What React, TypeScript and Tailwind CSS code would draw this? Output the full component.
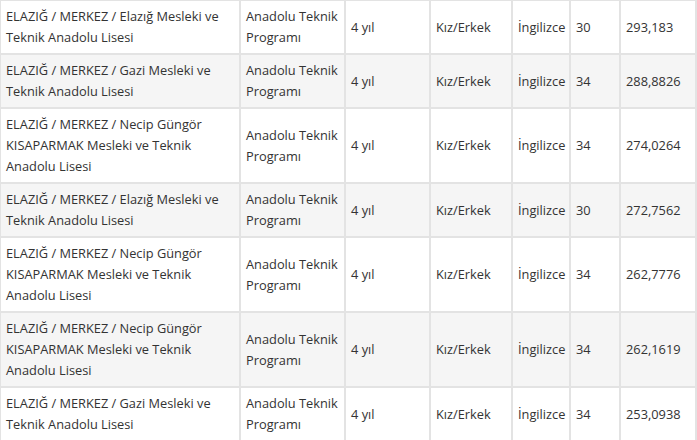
const rows = [
  ["ELAZIĞ / MERKEZ / Elazığ Mesleki ve Teknik Anadolu Lisesi", "30", "293,183"],
  ["ELAZIĞ / MERKEZ / Gazi Mesleki ve Teknik Anadolu Lisesi", "34", "288,8826"],
  ["ELAZIĞ / MERKEZ / Necip Güngör KISAPARMAK Mesleki ve Teknik Anadolu Lisesi", "34", "274,0264"],
  ["ELAZIĞ / MERKEZ / Elazığ Mesleki ve Teknik Anadolu Lisesi", "30", "272,7562"],
  ["ELAZIĞ / MERKEZ / Necip Güngör KISAPARMAK Mesleki ve Teknik Anadolu Lisesi", "34", "262,7776"],
  ["ELAZIĞ / MERKEZ / Necip Güngör KISAPARMAK Mesleki ve Teknik Anadolu Lisesi", "34", "262,1619"],
  ["ELAZIĞ / MERKEZ / Gazi Mesleki ve Teknik Anadolu Lisesi", "34", "253,0938"],
];

const td = "border-2 border-[#e3e3e3] px-[5px] py-[5px] align-middle";

export default function App() {
  return (
    <div className="h-[440px] w-[697px] overflow-hidden bg-white">
      <table
        className="-ml-[1px] -mt-[1px] w-[696px] table-fixed border-collapse text-[12.8px] leading-[21px] text-[#333]"
        style={{ fontFamily: '"Open Sans", "Noto Sans", sans-serif' }}
      >
        <colgroup>
          <col className="w-[240px]" />
          <col className="w-[105px]" />
          <col className="w-[85px]" />
          <col className="w-[82px]" />
          <col className="w-[58px]" />
          <col className="w-[50px]" />
          <col className="w-[76px]" />
        </colgroup>
        <tbody>
          {rows.map((r, i) => (
            <tr key={i} className={i % 2 === 1 ? "bg-[#f5f5f5]" : "bg-white"}>
              <td className={td}>{r[0]}</td>
              <td className={td}>Anadolu Teknik Programı</td>
              <td className={td}>4 yıl</td>
              <td className={td}>Kız/Erkek</td>
              <td className={td}>İngilizce</td>
              <td className={td}>{r[1]}</td>
              <td className={td}>{r[2]}</td>
            </tr>
          ))}
        </tbody>
      </table>
    </div>
  );
}
